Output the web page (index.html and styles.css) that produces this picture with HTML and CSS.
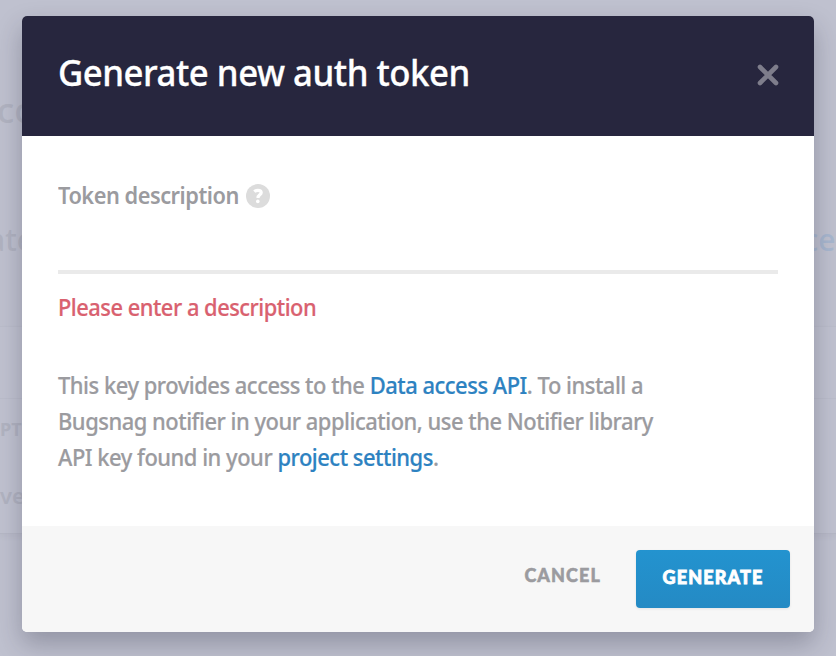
FILE: index.html
```html
<!DOCTYPE html>
<html lang="en">
<head>
<meta charset="utf-8">
<title>Generate new auth token</title>
<link rel="stylesheet" href="styles.css">
</head>
<body>
<main class="page" aria-hidden="true">
  <div class="page-title">co</div>
  <div class="page-intro"><span>ate</span><span class="page-link">ces</span></div>
  <section class="page-card">
    <div class="card-top"></div>
    <div class="card-heading">PT</div>
    <div class="card-row">ve</div>
  </section>
</main>
<div class="modal" role="dialog" aria-labelledby="title">
  <header class="modal-header">
    <h1 id="title">Generate new auth token</h1>
    <button class="close" aria-label="Close">
      <svg width="22" height="22" viewBox="0 0 22 22"><path d="M3 3 19 19M19 3 3 19"/></svg>
    </button>
  </header>
  <div class="modal-body">
    <label class="label" for="description"><span>Token description</span>
      <svg class="help" width="24" height="24" viewBox="0 0 24 24"><circle cx="12" cy="12" r="12"/><path d="M8.3 7.6Q9.8 6.3 12 6.3C14.1 6.3 15.2 7.2 15.2 8.7C15.2 10.9 12 10.9 12 13.9"/><circle class="dot" cx="11.8" cy="17.4" r="1.8"/></svg>
    </label>
    <input class="input" id="description" type="text">
    <p class="error">Please enter a description</p>
    <p class="note">This key provides access to the <a>Data access API</a>. To install a<br>Bugsnag notifier in your application, use the Notifier library<br>API key found in your <a>project settings</a>.</p>
  </div>
  <footer class="modal-footer">
    <button class="cancel">CANCEL</button>
    <button class="generate">GENERATE</button>
  </footer>
</div>
</body>
</html>
```
FILE: styles.css
```css
* { box-sizing: border-box; }
body {
  margin: 0;
  width: 836px;
  height: 656px;
  overflow: hidden;
  background: #bfc1cf;
  font-family: "Noto Sans", sans-serif;
  font-weight: 500;
}
h1, p { margin: 0; }
button { border: 0; padding: 0; background: none; font-family: inherit; }

.page { height: 656px; padding-top: 90px; color: #b1b3c1; overflow: hidden; }
.page-title { height: 130px; font-size: 35px; line-height: 40px; margin-left: -3px; }
.page-intro { height: 106px; display: flex; justify-content: space-between; font-size: 30px; line-height: 40px; margin: 0 -14px 0 -12px; }
.page-link { color: #a8b7cf; }
.page-card { height: 208px; border-top: 1px solid #bbbdcb; border-bottom: 1px solid #b6b8c6; background: #c0c2d0; box-shadow: 0 3px 5px rgba(80, 80, 110, .06); }
.card-top { height: 72px; border-bottom: 1px solid #bbbdcb; }
.card-heading { height: 61px; padding-top: 17px; font-size: 18px; line-height: 26px; font-weight: 700; }
.card-row { padding-top: 20px; font-size: 22px; line-height: 30px; font-weight: 600; }

.modal {
  position: absolute;
  left: 22px;
  top: 16px;
  width: 792px;
  height: 616px;
  display: flex;
  flex-direction: column;
  border-radius: 5px;
  overflow: hidden;
  background: #fff;
  box-shadow: 0 12px 26px rgba(30, 30, 50, .28);
}
.modal-header {
  height: 120px;
  padding: 0 35px 0 36px;
  display: flex;
  align-items: center;
  justify-content: space-between;
  background: #27263e;
}
h1, .label span, .error, .note { transform-origin: left center; white-space: nowrap; }
h1 { color: #fff; font-size: 37px; line-height: 50px; font-weight: 500; padding-bottom: 8px; margin-bottom: 0; letter-spacing: -.5px; transform: scaleX(.939); -webkit-text-stroke: .3px; }
.close { width: 22px; height: 22px; margin-bottom: 2px; }
.close svg { display: block; }
.close path { fill: none; stroke: #7e7d8b; stroke-width: 4.6; stroke-linecap: round; }

.modal-body { flex: 1; padding: 42px 36px 0; color: #9b9b9f; }
.label { display: flex; align-items: center; height: 36px; font-size: 23px; font-weight: 600; letter-spacing: -.5px; }
.label span { transform: scaleX(.946); padding-bottom: 2px; }
.help { margin-left: -3px; fill: #dcdcdc; }
.help path { fill: none; stroke: #fff; stroke-width: 3.2; }
.help .dot { fill: #fff; }
.input { display: block; width: 720px; height: 60px; border: 0; border-bottom: 4px solid #eaeaea; padding: 0; background: none; outline: 0; }
.error { margin-top: 15px; color: #d9616f; font-size: 23px; line-height: 36px; letter-spacing: -.5px; transform: scaleX(.949); -webkit-text-stroke: .2px; }
.note { margin-top: 42px; font-size: 23px; line-height: 36px; letter-spacing: -.5px; transform: scaleX(.953); -webkit-text-stroke: .2px; }
.note a { color: #2d82c1; }

.modal-footer {
  height: 106px;
  padding: 24px;
  display: flex;
  justify-content: flex-end;
  gap: 36px;
  background: #f7f7f7;
}
.modal-footer button { font-family: Lato, sans-serif; font-weight: 900; font-size: 18px; line-height: 24px; -webkit-text-stroke: .5px; }
.cancel { height: 50px; color: #9b9b9f; letter-spacing: 1.1px; margin-right: -1px; }
.modal-footer .generate { width: 154px; height: 58px; padding-bottom: 4px; border-radius: 4px; background: linear-gradient(#2393cf, #248ac4); color: #fff; letter-spacing: 1.15px; -webkit-text-stroke: .8px; box-shadow: 0 1px 3px rgba(0, 0, 0, .08); }
```
